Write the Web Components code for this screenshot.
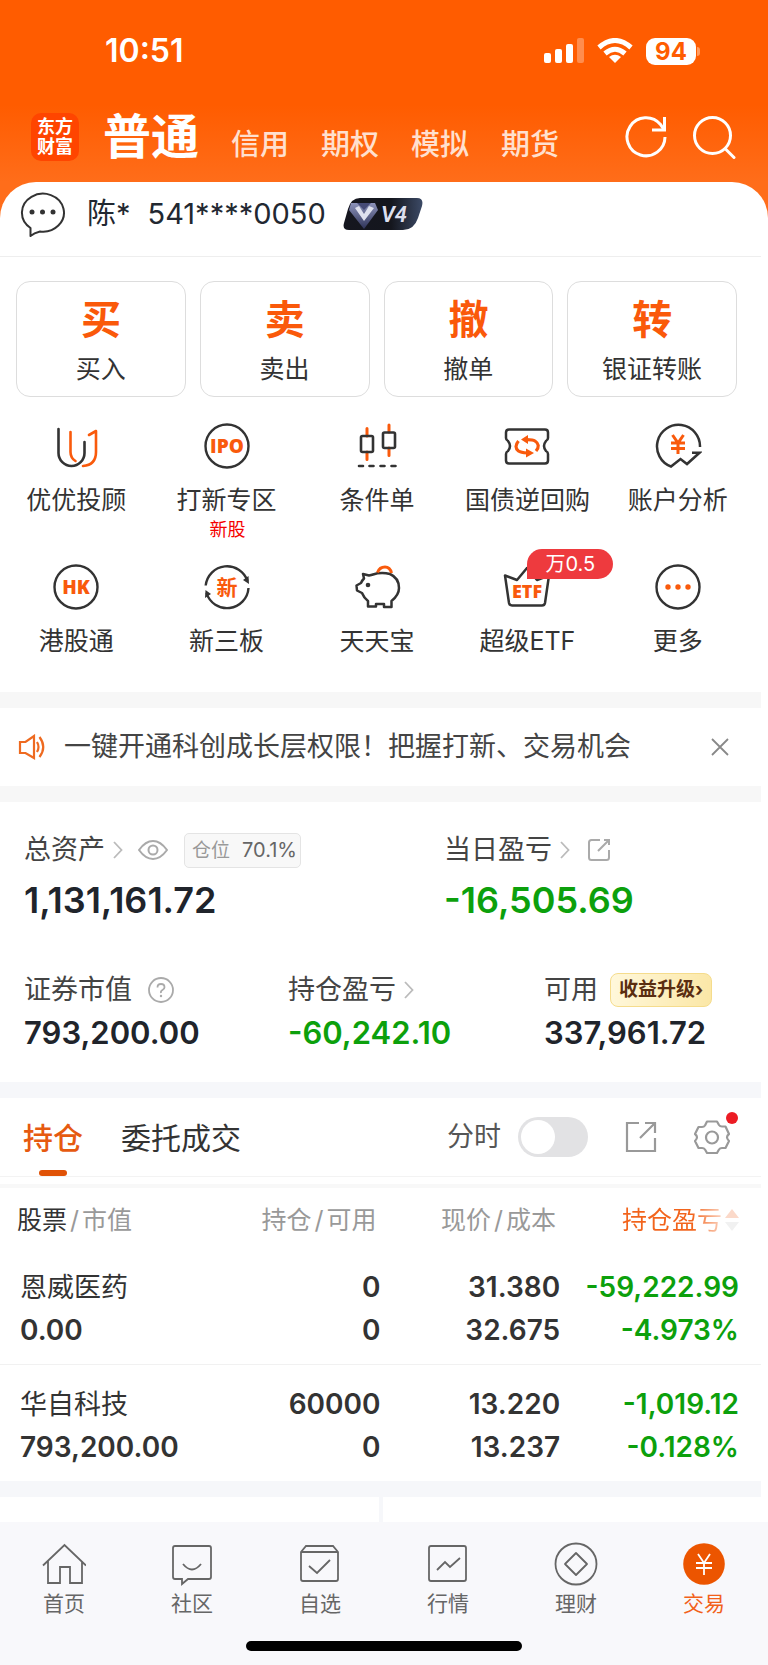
<!DOCTYPE html>
<html lang="zh-CN">
<head>
<meta charset="utf-8">
<meta name="viewport" content="width=device-width, initial-scale=1">
<title>东方财富 - 交易</title>
<style>
  body {
    margin: 0;
    background: #fff;
    color: #333;
    font-family: Inter, "Noto Sans CJK SC", sans-serif;
  }
</style>
</head>
<body>
<trade-app></trade-app>

<script>
const ICONS = {
  signal: ['0 0 40 26', `<g fill="#fff"><rect y="15" width="7" height="10" rx="2"/><rect x="11" y="11" width="7" height="14" rx="2"/><rect x="22" y="6" width="7" height="19" rx="2"/><rect x="33" width="7" height="25" rx="2" opacity=".3"/></g>`],
  wifi: ['0 0 36 26', `<g fill="none" stroke="#fff" stroke-width="5"><path d="M2 9.500Q18-4.500 34 9.500"/><path d="M8 15.500q10-8.500 20 0"/></g><path d="M12 19q6-4.500 12 0l-6 6z" fill="#fff"/>`],
  refresh: ['0 0 44 44', `<g fill="none" stroke="#fff" stroke-width="3"><path d="M41 22a19 19 0 1 1-4.500-12.500L39.500 14"/><path d="M40.500 2v13H28"/></g>`],
  search: ['0 0 44 44', `<g fill="none" stroke="#fff" stroke-width="3" stroke-linecap="round"><circle cx="20.500" cy="20.500" r="18"/><path d="M33.500 34l8.500 8.500"/></g>`],
  chat: ['0 0 46 46', `<path d="M10.500 37A21 19 0 1 1 20 40.500Q14 42 10.500 45z" fill="none" stroke="#333" stroke-width="2" stroke-linejoin="round"/><g fill="#333"><circle cx="12" cy="21" r="2.500"/><circle cx="22.500" cy="21" r="2.500"/><circle cx="33" cy="21" r="2.500"/></g>`],
  vip: ['0 0 80 32', `<defs><linearGradient id="a"><stop stop-color="#15161f"/><stop offset=".6" stop-color="#14161d"/><stop offset="1" stop-color="#3c4a66"/></linearGradient><linearGradient id="b" x2="0" y2="1"><stop stop-color="#8d93bb"/><stop offset="1" stop-color="#2d3257"/></linearGradient></defs><path d="M17 0h57q7 0 5 8l-4 12q-4 12-15 12H6q-7 0-5-7l4-14Q8 0 17 0z" fill="url(#a)"/><path d="M8 5h24l3 7-14 19L6 12z" fill="url(#b)"/><path d="M12 10l4-2 5 8 5-8 5 2-10 13z" fill="#dfe1ee"/><path d="M14 5h14l-7 7z" fill="#454a76"/><text x="38" y="24" fill="#dcdfee" font-size="22" font-weight="600" font-style="italic" font-family="Roboto, sans-serif">V4</text>`],
  uu: ['0 0 48 48', `<g fill="none" stroke-width="2.600" stroke-linecap="round" stroke-linejoin="round"><path d="M6.500 7v24a13 13 0 0 0 26 0V20" stroke="#333"/><path d="M18.500 10v20q0 6 5 9M31 44q13-1 13-14V9l-7 4" stroke="#f95a0c"/></g>`],
  ipo: ['0 0 48 48', `<circle cx="24" cy="24" r="21.500" fill="none" stroke="#333" stroke-width="2.400"/><text x="24" y="31" text-anchor="middle" fill="#f95a0c" font-family="Open Sans, sans-serif" font-weight="800" font-size="19">IPO</text>`],
  candles: ['0 0 48 48', `<g fill="none" stroke-width="2.600" stroke-linecap="round"><path d="M14 6.500V14M14 30v7.500M36 3v7M36 26v7.500" stroke="#f95a0c" stroke-width="3"/><rect x="8" y="14" width="12" height="16" rx="1.500" stroke="#333"/><rect x="30" y="10.500" width="12" height="15.500" rx="1.500" stroke="#333"/><path d="M6 44h4M16.500 44h4M27.500 44h4M38.500 44h4" stroke="#333"/></g>`],
  repo: ['0 0 48 48', `<path d="M6 7.500h36q3 0 3 3V16q0 2-2 3-4 5 0 10 2 1 2 3v6.500q0 3-3 3H6q-3 0-3-3V32q0-2 2-3 4-5 0-10-2-1-2-3v-5.500q0-3 3-3z" fill="none" stroke="#333" stroke-width="2.500"/><g fill="none" stroke="#f95a0c" stroke-width="3.200"><path d="M15.500 19q-5 6 0 10 2 1.500 9 2M33 29q5-6-1-10-2-1.300-8-1.300"/></g><path d="M25 13v9l-7-4.500zM23 26.500v9l8-4.500z" fill="#f95a0c"/>`],
  analysis: ['0 0 48 48', `<path d="M46 25A21.500 21.500 0 1 0 17 44.500l9.500-7.500 6.500 5 12.500-11.300H38" fill="none" stroke="#333" stroke-width="2.500"/><path d="M18.500 13l5.500 8 5.500-8M24 21v11M17 21h14M17 26.500h14" fill="none" stroke="#f95a0c" stroke-width="3"/>`],
  hk: ['0 0 48 48', `<circle cx="24" cy="24" r="21.500" fill="none" stroke="#333" stroke-width="2.400"/><text x="24" y="31" text-anchor="middle" fill="#f95a0c" font-family="Open Sans, sans-serif" font-weight="800" font-size="19">HK</text>`],
  neeq: ['0 0 48 48', `<path d="M2.700 22.500A21.500 21.500 0 0 1 44.500 18M45.500 25A21.500 21.500 0 0 1 3.500 30" fill="none" stroke="#333" stroke-width="2.400"/><path d="M40 17l5.500-4 .5 8zM2 35l.5-8 5.500 4z" fill="#333"/><text x="24" y="32" text-anchor="middle" fill="#f95a0c" font-family="Noto Sans CJK SC, sans-serif" font-weight="700" font-size="21">新</text>`],
  pig: ['0 0 48 48', `<path d="M10 11l6 1.500q2.500-.500 4-1 8-2.500 17-.5Q46 15 46 25q0 7-7.500 13v6H31v-3h-8v2.500h-8V38q-4-3-6-8l-5-2.500-.5-5L8 20q1-2.500 3-4.500z" fill="none" stroke="#333" stroke-width="2.500" stroke-linejoin="round"/><circle cx="15" cy="22" r="2.300" fill="#333"/><path d="M24.500 9.500q2-5.500 7.500-5.500 5 0 6.500 6" fill="none" stroke="#f95a0c" stroke-width="3"/>`],
  etf: ['0 0 48 48', `<path d="M2 12.500L6 40q.5 2.500 3 2.500h30q2.500 0 3-2.500l4-27.500-12 4.500L24 5 14 17z" fill="none" stroke="#333" stroke-width="2.500" stroke-linejoin="round"/><text x="24" y="35" text-anchor="middle" fill="#f95a0c" font-family="Open Sans, sans-serif" font-weight="800" font-size="18">ETF</text>`],
  more: ['0 0 48 48', `<circle cx="24" cy="24" r="21.500" fill="none" stroke="#333" stroke-width="2.400"/><g fill="#f95a0c"><circle cx="14" cy="24" r="2.700"/><circle cx="24" cy="24" r="2.700"/><circle cx="34" cy="24" r="2.700"/></g>`],
  speaker: ['0 0 28 26', `<g fill="none" stroke="#ee6a20" stroke-width="2.200"><path d="M2 8h5.500L16 2v22l-8.500-5H2z"/><path d="M19 8q3 5 0 10M21.500 3q7.500 10 0 20"/></g>`],
  close: ['0 0 18 18', `<path d="M1 1l16 16M17 1L1 17" stroke="#888" stroke-width="1.800"/>`],
  chevron: ['0 0 10 18', `<path d="M1 1l7.500 8L1 17" fill="none" stroke="#bbb" stroke-width="1.800"/>`],
  eye: ['0 0 30 20', `<g fill="none" stroke="#aaa" stroke-width="2"><path d="M1 10Q7.500 1 15 1t14 9q-6.500 9-14 9T1 10z"/><circle cx="15" cy="10" r="4.500"/></g>`],
  share: ['0 0 24 24', `<path d="M13 2H4.500Q2 2 2 4.500v15Q2 22 4.500 22h15q2.500 0 2.500-2.500V12M17 2h5v5M22 2L11 13" fill="none" stroke="#aaa" stroke-width="2"/>`],
  help: ['0 0 26 26', `<g fill="none" stroke="#aaa" stroke-width="1.800"><circle cx="13" cy="13" r="12"/><path d="M9.500 10.500Q9.500 7 13 7t3.500 3.200Q16.500 12 14.500 13T13 16"/></g><circle cx="13" cy="19" r="1.200" fill="#aaa"/>`],
  export: ['0 0 32 32', `<path d="M14 2H2v28h28V17M20 2h10v10M30 2L15 17" fill="none" stroke="#999" stroke-width="2.200"/>`],
  gear: ['0 0 36 36', `<g fill="none" stroke="#999" stroke-width="2.200"><path d="M13 2.500h10l2 3.500q1 1.500 3 1.500h3.500L35 15q-4 3 0 7l-3.500 7H28q-2 0-3 1.500l-2 3.500H13l-2-3.500Q10 29 8 29H4.500L1 22q4-4 0-7l3.500-7H8q2 0 3-1.500z" stroke-linejoin="round"/><circle cx="18" cy="18.500" r="6"/></g>`],
  sort: ['0 0 14 24', `<path d="M7 1l7 9H0z" fill="#fbd9c9"/><path d="M7 23l7-9H0z" fill="#f1f1f1"/>`],
  home: ['0 0 44 44', `<path d="M1 23.500L22.500 3 44 23.500M6 19v22h12V25h10v16h12V19" fill="none" stroke="#666" stroke-width="1.800"/>`],
  community: ['0 0 44 44', `<path d="M5 4h34q2 0 2 2v29q0 2-2 2H18l-6 5v-5H5q-2 0-2-2V6q0-2 2-2zM13 22q9 11 18 0" fill="none" stroke="#666" stroke-width="1.800"/>`],
  watch: ['0 0 44 44', `<path d="M8 4h27l5 6v27q0 2-2 2H5q-2 0-2-2V10zM3 10h37M11 24l8 7 13-13" fill="none" stroke="#666" stroke-width="1.800"/>`],
  market: ['0 0 44 44', `<path d="M5 4h33q2 0 2 2v31q0 2-2 2H5q-2 0-2-2V6q0-2 2-2zM11 28l8-8 5 5 10-9" fill="none" stroke="#666" stroke-width="1.800"/>`],
  wealth: ['0 0 44 44', `<g fill="none" stroke="#666" stroke-width="1.800"><circle cx="22" cy="22" r="20.500"/><path d="M22 11l11 11-11 11-11-11z" stroke-linejoin="round"/></g>`],
  trade: ['0 0 44 44', `<circle cx="22" cy="22" r="20.800" fill="#ec5500"/><path d="M16 12l6 9 6-9M22 21v12M14 21h16M14 26h16" fill="none" stroke="#fff" stroke-width="1.800"/>`]
};

/* Attaches an open shadow root filled with the given styles and markup. */
const define = (name, css, html) => customElements.define(name, class extends HTMLElement {
  constructor() {
    super();
    const template = document.createElement('template');
    const markup = typeof html === 'function' ? html(this) : html;
    template.innerHTML = `<style>*{box-sizing:border-box}button{margin:0;padding:0;border:0;background:none;color:inherit;font:inherit}a{color:inherit;text-decoration:none}${css}</style>${markup}`;
    this.attachShadow({ mode: 'open' }).append(template.content.cloneNode(true));
  }
});

customElements.define('app-icon', class extends HTMLElement {
  connectedCallback() {
    if (this.shadowRoot) return;
    const [box, shapes] = ICONS[this.getAttribute('name')];
    const [, , w, h] = box.split(' ');
    this.attachShadow({ mode: 'open' }).innerHTML =
      `<style>:host{display:block;flex:none;line-height:0}</style><svg viewBox="${box}" width="${w}" height="${h}" aria-hidden="true">${shapes}</svg>`;
  }
});

define('status-bar', `
  :host { display: flex; align-items: center; padding: 35px 68px 0 105px; color: #fff; }
  time { flex: 1; font-size: 32px; line-height: 32px; font-weight: 600; }
  .icons { display: flex; align-items: center; gap: 13px; }
  .battery { display: flex; align-items: center; gap: 1px; }
  .level { width: 50px; border-radius: 9px; background: #fff; color: #ff5c00; font-size: 24px; line-height: 27px; font-weight: 700; text-align: center; }
  .cap { width: 3px; height: 9px; border-radius: 0 3px 3px 0; background: #ff9c62; }
`, `<time>10:51</time><div class="icons"><app-icon name="signal"></app-icon><app-icon name="wifi"></app-icon><div class="battery"><span class="level">94</span><span class="cap"></span></div></div>`);

define('account-nav', `
  :host { display: flex; align-items: flex-end; padding: 46px 32px 61px 31px; color: #fff; }
  .logo { display: grid; place-content: center; width: 48px; height: 48px; margin-right: 24px; border-radius: 10px; background: #ff4500; font-size: 18px; line-height: 20px; font-weight: 700; text-align: center; }
  nav { display: flex; align-items: flex-end; gap: 32px; flex: 1; }
  a { color: #ffe0cf; font-size: 29px; line-height: 32px; font-weight: 500; white-space: nowrap; }
  a[aria-current] { color: #fff; font-size: 48px; line-height: 48px; font-weight: 700; }
  .tools { display: flex; gap: 24px; padding-bottom: 2px; }
`, `<div class="logo">东方<br>财富</div>
<nav><a href="#normal" aria-current="page">普通</a><a href="#credit">信用</a><a href="#options">期权</a><a href="#demo">模拟</a><a href="#futures">期货</a></nav>
<div class="tools"><button aria-label="刷新"><app-icon name="refresh"></app-icon></button><button aria-label="搜索"><app-icon name="search"></app-icon></button></div>`);

define('account-bar', `
  :host { display: flex; align-items: center; padding: 9px 20px 19px; border-bottom: 1px solid #eee; color: #222831; font-size: 29px; line-height: 46px; }
  .name { margin: 0 17px 0 21px; }
  .number { margin-right: 17px; }
`, `<app-icon name="chat"></app-icon><span class="name">陈*</span><span class="number">541****0050</span><app-icon name="vip"></app-icon>`);

define('trade-action', `
  :host { display: block; min-width: 0; }
  button { display: flex; flex-direction: column; align-items: center; gap: 14px; width: 100%; padding: 18px 0 12px; border: 1px solid #ddd; border-radius: 14px; }
  .glyph { color: #fa590a; font-size: 40px; line-height: 40px; font-weight: 700; }
  .label { font-size: 25px; line-height: 30px; }
`, `<button><span class="glyph"><slot name="glyph"></slot></span><span class="label"><slot></slot></span></button>`);

define('quick-entry', `
  :host { display: block; min-width: 0; }
  a { display: flex; flex-direction: column; align-items: center; position: relative; }
  .label { margin-top: 15px; font-size: 25px; line-height: 30px; white-space: nowrap; }
  ::slotted([slot="note"]) { margin: 5px 0 0 2px; color: #f50000; font-size: 18px; line-height: 20px; }
  ::slotted([slot="badge"]) { position: absolute; top: -14px; left: 50%; width: 86px; border-radius: 15px 15px 15px 0; background: #ee3a3e; color: #fff; font-size: 20px; line-height: 30px; text-align: center; }
`, el => `<a href="#${el.getAttribute('icon')}"><app-icon name="${el.getAttribute('icon')}"></app-icon><span class="label"><slot></slot></span><slot name="note"></slot><slot name="badge"></slot></a>`);

define('section-band', `:host { display: block; height: 16px; background: #f7f7f7; } :host([cool]) { background: #f6f7fa; }`, ``);

define('notice-bar', `
  :host { display: flex; align-items: center; gap: 18px; padding: 19px 32px 19px 18px; color: #444; font-size: 27px; line-height: 40px; }
  a { flex: 1; white-space: nowrap; }
`, `<app-icon name="speaker"></app-icon><a href="#notice"><slot></slot></a><button aria-label="关闭"><app-icon name="close"></app-icon></button>`);

define('asset-stat', `
  :host { display: block; color: #20242b; white-space: nowrap; }
  :host([down]) .value { color: #0ca00c; }
  .label { display: flex; align-items: center; gap: 8px; height: 36px; color: #444; font-size: 27px; line-height: 34px; }
  .value { margin-top: 7px; font-size: 31px; line-height: 36px; font-weight: 600; }
  :host([large]) .value { margin-top: 12px; font-size: 36px; line-height: 40px; }
`, `<div class="label"><slot name="label"></slot></div><div class="value"><slot></slot></div>`);

define('asset-summary', `
  :host { display: block; padding: 30px 0 31px 24px; }
  .row { display: grid; }
  .total { grid-template-columns: 57fr 43fr; }
  .detail { grid-template-columns: 264fr 256fr 217fr; margin-top: 52px; }
  .eye { margin-left: 7px; }
  .ratio { display: flex; align-items: center; gap: 12px; height: 35px; margin-left: 8px; padding: 0 3px 0 7px; border: 1px solid #e4e4e4; border-radius: 5px; background: #f8f8f8; color: #999; font-size: 19px; line-height: 33px; }
  .ratio b { color: #666; font-size: 20px; font-weight: 400; }
  .out { margin-left: 9px; }
  .help { margin-left: 8px; }
  .promo { margin-left: 4px; padding: 0 8px; border: 1px solid #f5dc8c; border-radius: 8px; background: linear-gradient(100deg, #fff8dc, #fbe7a6); color: #5a2d10; font-size: 19px; line-height: 32px; font-weight: 700; }
  span[slot] + app-icon.help, span[slot] + .promo { flex: none; }
`, `<div class="row total">
<asset-stat large><span slot="label">总资产</span><app-icon slot="label" name="chevron"></app-icon><app-icon slot="label" class="eye" name="eye"></app-icon><span slot="label" class="ratio">仓位 <b>70.1%</b></span>1,131,161.72</asset-stat>
<asset-stat large down><span slot="label">当日盈亏</span><app-icon slot="label" name="chevron"></app-icon><app-icon slot="label" class="out" name="share"></app-icon>-16,505.69</asset-stat>
</div><div class="row detail">
<asset-stat><span slot="label">证券市值</span><app-icon slot="label" class="help" name="help"></app-icon>793,200.00</asset-stat>
<asset-stat down><span slot="label">持仓盈亏</span><app-icon slot="label" name="chevron"></app-icon>-60,242.10</asset-stat>
<asset-stat><span slot="label">可用</span><a slot="label" class="promo" href="#upgrade">收益升级›</a>337,961.72</asset-stat>
</div>`);

define('position-tabs', `
  :host { display: flex; align-items: flex-start; padding: 20px 31px 0 23px; border-bottom: 1px solid #f3f3f3; font-size: 30px; line-height: 40px; }
  .tabs { display: flex; gap: 38px; flex: 1; }
  .tabs button { padding-bottom: 18px; }
  .tabs [aria-selected="true"] { display: flex; flex-direction: column; align-items: center; gap: 12px; padding: 0; color: #e65a10; font-weight: 500; }
  .tabs [aria-selected="true"]::after { content: ""; width: 28px; height: 6px; border-radius: 3px; background: #e05206; }
  .tools { display: flex; align-items: center; height: 38px; }
  label { display: flex; align-items: center; gap: 17px; color: #555; font-size: 27px; }
  input { appearance: none; width: 70px; height: 40px; margin: 0; padding: 3px; border-radius: 20px; background: #e2e2e4; }
  input::before { content: ""; display: block; width: 34px; height: 34px; border-radius: 50%; background: #fff; }
  input:checked { background: #e65a10; }
  input:checked::before { margin-left: auto; }
  .export { margin: 0 37px; }
  .gear { position: relative; }
  .gear::after { content: ""; position: absolute; top: -7px; right: -8px; width: 12px; height: 12px; border-radius: 50%; background: #ec1c24; }
`, `<div class="tabs" role="tablist"><button role="tab" aria-selected="true">持仓</button><button role="tab" aria-selected="false">委托成交</button></div>
<div class="tools"><label>分时<input type="checkbox" role="switch"></label><button class="export" aria-label="分享"><app-icon name="export"></app-icon></button><button class="gear" aria-label="设置"><app-icon name="gear"></app-icon></button></div>`);

define('position-table', `
  :host { display: block; margin-top: 7px; border-top: 4px solid #f8f8f8; }
  table { width: 100%; table-layout: fixed; border-collapse: collapse; text-align: right; white-space: nowrap; }
  th { height: 60px; padding: 4px 4px 0 0; color: #999; font-size: 25px; line-height: 36px; font-weight: 400; }
  th i { margin: 0 3px; font-style: normal; }
  th:first-child { padding-left: 17px; text-align: left; }
  th b { color: #333; font-weight: 400; }
  .sorted { display: flex; align-items: center; justify-content: flex-end; gap: 3px; }
  .sorted span { background: linear-gradient(90deg, #f2641c 70%, #fbd3c0); background-clip: text; color: transparent; }
  td { padding: 18px 0 12px; font-size: 28px; line-height: 43px; font-weight: 600; }
  td:first-child { padding-left: 20px; text-align: left; }
  td:nth-child(3) { padding-right: 3px; }
  th:nth-child(3) { padding-right: 7px; }
  th:last-child, td:last-child { padding-right: 22px; }
  td span { display: block; }
  .stock { font-size: 27px; font-weight: 400; }
  tr + tr td { border-top: 1px solid #f1f1f1; }
  .down { color: #0ca00c; }
`, `<table><colgroup><col style="width:25%"><col style="width:25%"><col style="width:24%"><col style="width:26%"></colgroup>
<thead><tr><th><b>股票</b><i>/</i>市值</th><th>持仓<i>/</i>可用</th><th>现价<i>/</i>成本</th><th><div class="sorted"><span>持仓盈亏</span><app-icon name="sort"></app-icon></div></th></tr></thead>
<tbody>
<tr><td><span class="stock">恩威医药</span><span>0.00</span></td><td><span>0</span><span>0</span></td><td><span>31.380</span><span>32.675</span></td><td class="down"><span>-59,222.99</span><span>-4.973%</span></td></tr>
<tr><td><span class="stock">华自科技</span><span>793,200.00</span></td><td><span>60000</span><span>0</span></td><td><span>13.220</span><span>13.237</span></td><td class="down"><span>-1,019.12</span><span>-0.128%</span></td></tr>
</tbody></table>`);

define('market-strip', `
  :host { display: grid; grid-template-columns: 1fr 1fr; gap: 4px; height: 25px; background: #f6f7fa; }
  div { background: #fff; }
`, `<div></div><div></div>`);

define('tab-item', `
  :host { display: block; color: #666; }
  :host([active]) { color: #f2611a; }
  a { display: flex; flex-direction: column; align-items: center; gap: 4px; font-size: 21px; line-height: 28px; }
`, el => `<a href="#${el.getAttribute('icon')}"><app-icon name="${el.getAttribute('icon')}"></app-icon><slot></slot></a>`);

define('tab-bar', `
  :host { display: block; padding: 20px 0 14px; background: #f8f8fb; }
  nav { display: grid; grid-template-columns: repeat(6, 1fr); }
  .indicator { width: 36%; height: 10px; margin: 23px auto 0; border-radius: 5px; background: #000; }
`, `<nav><slot></slot></nav><div class="indicator"></div>`);

define('trade-app', `
  :host { display: block; }
  header { background: linear-gradient(#ff5c00 0, #ff5c00 105px, #ff6d1a 182px); }
  main { position: relative; margin-top: -40px; padding-right: 7px; border-radius: 36px 36px 0 0; background: #fff; }
  .actions { display: grid; grid-template-columns: repeat(4, 1fr); gap: 14px; padding: 24px 24px 0 16px; }
  .entries { display: grid; grid-template-columns: repeat(5, 1fr); row-gap: 23px; padding: 25px 8px 36px 1px; }
`, `<header><status-bar></status-bar><account-nav></account-nav></header>
<main>
<account-bar></account-bar>
<div class="actions">
<trade-action><span slot="glyph">买</span>买入</trade-action>
<trade-action><span slot="glyph">卖</span>卖出</trade-action>
<trade-action><span slot="glyph">撤</span>撤单</trade-action>
<trade-action><span slot="glyph">转</span>银证转账</trade-action>
</div>
<div class="entries" id="entries"></div>
<section-band></section-band>
<notice-bar>一键开通科创成长层权限！把握打新、交易机会</notice-bar>
<section-band></section-band>
<asset-summary></asset-summary>
<section-band cool></section-band>
<position-tabs></position-tabs>
<position-table></position-table>
<section-band cool></section-band>
<market-strip></market-strip>
</main>
<tab-bar id="tabs"></tab-bar>`);

/* Fills the entry grid and the bottom bar from short lists. */
const root = document.querySelector('trade-app').shadowRoot;
root.getElementById('entries').innerHTML = [
  ['uu', '优优投顾'], ['ipo', '打新专区', '<span slot="note">新股</span>'], ['candles', '条件单'], ['repo', '国债逆回购'], ['analysis', '账户分析'],
  ['hk', '港股通'], ['neeq', '新三板'], ['pig', '天天宝'], ['etf', '超级ETF', '<span slot="badge">万0.5</span>'], ['more', '更多']
].map(([icon, label, extra = '']) => `<quick-entry icon="${icon}">${label}${extra}</quick-entry>`).join('');
root.getElementById('tabs').innerHTML = [
  ['home', '首页'], ['community', '社区'], ['watch', '自选'], ['market', '行情'], ['wealth', '理财'], ['trade', '交易']
].map(([icon, label]) => `<tab-item icon="${icon}"${icon === 'trade' ? ' active' : ''}>${label}</tab-item>`).join('');
</script>
</body>
</html>
